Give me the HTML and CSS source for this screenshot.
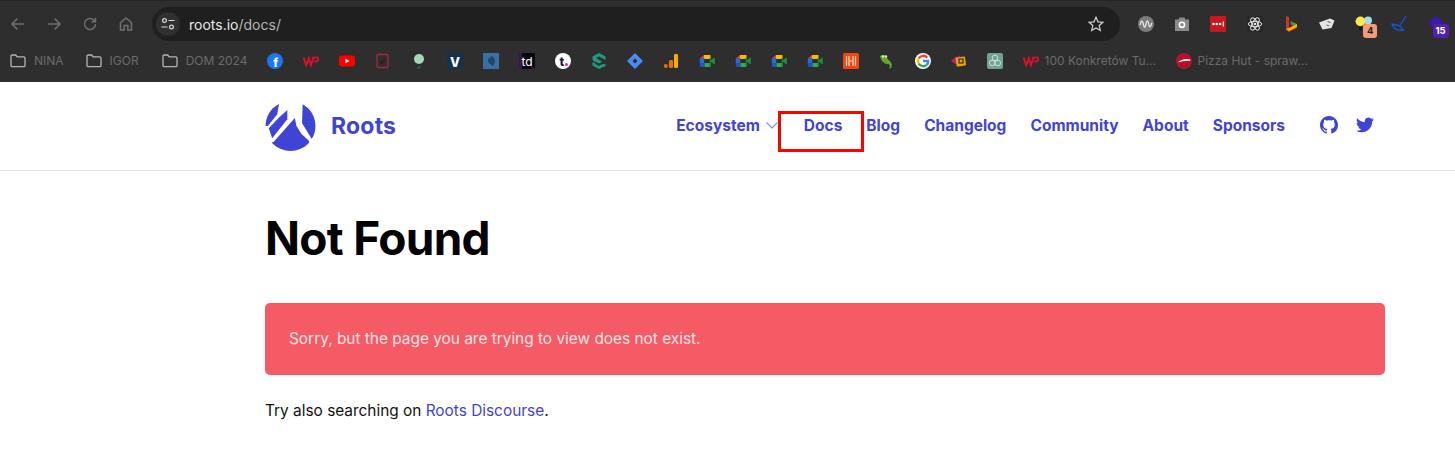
FILE: index.html
```html
<!DOCTYPE html>
<html lang="en">
<head>
<meta charset="utf-8">
<title>Not Found – Roots</title>
<link rel="stylesheet" href="styles.css">
</head>
<body>
<svg class="defs" width="0" height="0" aria-hidden="true">
  <symbol id="folder" viewBox="0 0 16 16"><path d="M1 3.200c0-.7.5-1.200 1.200-1.200h3.400l1.600 1.800h6.600c.7 0 1.200.5 1.200 1.200v7.400c0 .7-.5 1.200-1.200 1.200H2.200c-.7 0-1.200-.5-1.200-1.200z" fill="none" stroke="#b4b4b4" stroke-width="1.300"/></symbol>
  <symbol id="meet" viewBox="0 0 16 16">
    <path d="M5 2h6.500v4H5z" fill="#fbbc04"/>
    <path d="M.8 5.500 5 2v3.500z" fill="#ea4335"/>
    <path d="M.8 5.500h4.700v5H.8z" fill="#1f6fe0"/>
    <path d="M.8 10.500h4.700V14H2c-.7 0-1.200-.5-1.200-1.200z" fill="#1a57c4"/>
    <path d="M5.500 10h6v4h-6z" fill="#34a853"/>
    <path d="M10.500 5v9H11c.6 0 1-.4 1-1V5z" fill="#188038"/>
    <path d="M11 8l4-3.200c.4-.3.800 0 .8.400v5.600c0 .4-.4.700-.8.400z" fill="#1e8e3e"/>
    <path d="M5.500 6h5v4h-5z" fill="#2d2d2d"/>
  </symbol>
  <symbol id="wp" viewBox="0 0 16 16"><path d="M.6 4.500 3.200 12 5.900 5.500 8 12 10.400 4.500h3c2.400 0 2.400 4-.2 4h-2" fill="none" stroke="#d5112b" stroke-width="2.100"/></symbol>
</svg>

<header class="browser">
  <div class="toolbar">
    <div class="toolbar-nav">
      <svg class="tool" viewBox="0 0 16 16"><path d="M14 8H2.500M7.500 2.500 2 8l5.500 5.500" /></svg>
      <svg class="tool" viewBox="0 0 16 16"><path d="M2 8h11.500M8.500 2.500 14 8l-5.500 5.500" /></svg>
      <svg class="tool" viewBox="0 0 16 16"><path d="M13.500 8a5.500 5.500 0 1 1-1.600-3.900L13.500 5.700M13.500 1.800v3.900H9.600" /></svg>
      <svg class="tool" viewBox="0 0 16 16"><path d="M2.500 14V6.700L8 2l5.500 4.700V14h-3.700V9.500H6.200V14z" /></svg>
    </div>
    <div class="omnibox">
      <span class="tune">
        <svg viewBox="0 0 16 16" width="16" height="16"><circle cx="4.500" cy="4.500" r="1.900"/><path d="M8.500 4.500h6M1.500 11h6"/><circle cx="11.500" cy="11" r="1.900"/></svg>
      </span>
      <span class="url"><span class="url-host">roots.io</span>/docs/</span>
      <svg class="star" viewBox="0 0 16 16" width="16" height="16"><path d="M8 1.300l2 4.500 4.900.5-3.700 3.300 1.100 4.800L8 12l-4.300 2.400 1.100-4.800L1.100 6.300 6 5.800z"/></svg>
    </div>
    <div class="extensions">
      <svg class="ext" viewBox="0 0 16 16"><circle cx="8" cy="8" r="8" fill="#7c7c7c"/><path d="M2.200 9C3 4 4.500 4 5.300 8s1.700 4.500 2.700 0 2-4 2.700 0 2 3.500 3.100-1" fill="none" stroke="#e8e8e8" stroke-width="1.300"/></svg>
      <svg class="ext" viewBox="0 0 16 16"><path d="M1 3.500h3.500l1-2h5l1 2H15V15H1z" fill="#8a8a8a"/><circle cx="8" cy="8.800" r="3.400" fill="#fff"/><circle cx="8" cy="8.800" r="1.800" fill="#8a8a8a"/></svg>
      <svg class="ext" viewBox="0 0 16 16"><rect width="16" height="16" rx="1" fill="#c8171e"/><circle cx="3.500" cy="8" r="1.300" fill="#fff"/><circle cx="6.800" cy="8" r="1.300" fill="#fff"/><circle cx="10.100" cy="8" r="1.300" fill="#fff"/><path d="M13.300 5.500v5" stroke="#fff" stroke-width="1.200"/></svg>
      <svg class="ext" viewBox="0 0 16 16"><rect width="16" height="16" fill="#282828"/><g fill="none" stroke="#e6e6e6" stroke-width="1"><ellipse cx="8" cy="8" rx="6.800" ry="2.700"/><ellipse cx="8" cy="8" rx="6.800" ry="2.700" transform="rotate(60 8 8)"/><ellipse cx="8" cy="8" rx="6.800" ry="2.700" transform="rotate(120 8 8)"/></g><circle cx="8" cy="8" r="1.300" fill="#e6e6e6"/></svg>
      <svg class="ext" viewBox="0 0 16 16"><path d="M3 0l3 1v11l4-2-2-1-1-3 7 3v3l-8 4-3-2z" fill="#c53b2b"/><path d="M7 5l7 3v3L9 8z" fill="#3aa64a"/><path d="M6 12l8-4v3l-8 4-3-2z" fill="#f4b400"/></svg>
      <svg class="ext" viewBox="0 0 16 16"><path d="M0 6.500 11 2.500l4.500 2-3 7.500-9 1.500z" fill="#e4e4e4"/><path d="M8.500 5.500l3 1M7.500 9l2.500.8" stroke="#555" stroke-width="1"/></svg>
      <span class="ext-wrap">
        <svg class="ext ext-over" viewBox="0 0 20 18"><circle cx="14.500" cy="5" r="4.500" fill="#9fdcf2"/><circle cx="6" cy="6" r="5.500" fill="#f8e84a"/><path d="M4.500 12h3v4h-3z" fill="#111"/></svg>
        <span class="badge badge-orange">4</span>
      </span>
      <svg class="ext" viewBox="0 0 16 16"><path d="M15 0 9 9.500" stroke="#1a55d8" stroke-width="1.200" fill="none"/><path d="M1 8 8 9.500 12.500 14c-4 1-9.500 0-11.500-6z" fill="none" stroke="#1a55d8" stroke-width="1.300"/></svg>
      <span class="ext-wrap">
        <svg class="ext" viewBox="0 0 16 16"><path d="M8 0l8 7-8 7-8-7z" fill="#3a1aa8"/></svg>
        <span class="badge badge-purple">15</span>
      </span>
    </div>
  </div>

  <nav class="bookmarks">
    <a class="bm bm-folder"><svg class="fav"><use href="#folder"/></svg>NINA</a>
    <a class="bm bm-folder bm-middle"><svg class="fav"><use href="#folder"/></svg>IGOR</a>
    <a class="bm bm-folder bm-last"><svg class="fav"><use href="#folder"/></svg>DOM 2024</a>
    <svg class="fav" viewBox="0 0 16 16"><circle cx="8" cy="8" r="8" fill="#1877f2"/><text x="8.800" y="13.500" class="fav-text" font-size="12" fill="#fff" text-anchor="middle">f</text></svg>
    <svg class="fav"><use href="#wp"/></svg>
    <svg class="fav" viewBox="0 0 16 16"><rect y="2.500" width="16" height="11" rx="3" fill="#f00"/><path d="M6.500 5.700v4.600L10.500 8z" fill="#fff"/></svg>
    <svg class="fav" viewBox="0 0 16 16"><rect x="2" y="1.500" width="11" height="13" rx="1" fill="none" stroke="#a6283c" stroke-width="1.300"/><path d="M5 8l2 2 3-4" fill="none" stroke="#1f1f1f" stroke-width="1.500"/></svg>
    <svg class="fav" viewBox="0 0 16 16"><circle cx="8" cy="6" r="5" fill="#a6d8b2"/><circle cx="8" cy="14.500" r="1.500" fill="#0b6b3a"/></svg>
    <svg class="fav" viewBox="0 0 16 16"><rect width="16" height="16" fill="#12324f"/><text x="8" y="13.500" class="fav-text" font-size="13" fill="#fff" text-anchor="middle">V</text></svg>
    <svg class="fav" viewBox="0 0 16 16"><rect width="16" height="16" fill="#3a6ea5"/><path d="M5 6 9 3l3 3v3l-2 4-3-2-2-2z" fill="#22456e"/></svg>
    <svg class="fav" viewBox="0 0 16 16"><rect width="16" height="16" fill="#0a0610"/><path d="M0 0h3v16H0zM11 11l5 5h-3z" fill="#3c1550"/><text x="8" y="12.500" class="fav-text-light" font-size="12" fill="#fff" text-anchor="middle">td</text></svg>
    <svg class="fav" viewBox="0 0 16 16"><circle cx="8" cy="8" r="8" fill="#fff"/><text x="6.800" y="13" class="fav-text" font-size="12.500" fill="#1c1f3a" text-anchor="middle">t</text><circle cx="11.500" cy="11.500" r="1.500" fill="#ff1aa3"/></svg>
    <svg class="fav" viewBox="0 0 16 16"><path d="M8 0l6.500 3.500V7L11 5 8 3.500 5 5l6 3.500-3 2-4-2 .1 2.500L8 13l3-1.800 3.500-.2v2L8 16l-6.500-3.500V9l4 2-.5.500L3 8 1.500 7V3.500z" fill="#1f9a83"/></svg>
    <svg class="fav" viewBox="0 0 16 16"><path d="M8 0l8 8-8 8-8-8z" fill="#4c8bf5"/><path d="M8 5.500 10.500 8 8 10.500 5.500 8z" fill="#2d2d2d"/></svg>
    <svg class="fav" viewBox="0 0 16 16"><rect x="11" y="1" width="4" height="14" rx="1.200" fill="#f9ab00"/><rect x="6" y="7" width="4" height="8" rx="1.200" fill="#e37400"/><circle cx="2.800" cy="13" r="2" fill="#e37400"/></svg>
    <svg class="fav"><use href="#meet"/></svg>
    <svg class="fav"><use href="#meet"/></svg>
    <svg class="fav"><use href="#meet"/></svg>
    <svg class="fav"><use href="#meet"/></svg>
    <svg class="fav" viewBox="0 0 16 16"><rect width="16" height="16" rx="1.500" fill="#f4450f"/><path d="M3.500 3v10M6 3v10M10 3v10M12.500 3v10M6 8h4" stroke="#ffd9c8" stroke-width="1.200"/></svg>
    <svg class="fav" viewBox="0 0 16 16"><path d="M1 3.500c2-2 6-2 7 1 1 2.500 3.500 3.500 4.500 6 1 3-.5 5.500-2.500 5 1-1 1-3 0-4.500C7 12 3 9 2 6z" fill="#63a62d"/><circle cx="4" cy="3.500" r="1.300" fill="#d7e89a"/><circle cx="7" cy="3.500" r="1.300" fill="#d7e89a"/></svg>
    <svg class="fav" viewBox="0 0 16 16"><circle cx="8" cy="8" r="8" fill="#fff"/><g fill="none" stroke-width="2.400"><path d="M12.200 4.700A5.200 5.200 0 0 0 3.700 5.400" stroke="#ea4335"/><path d="M3.700 5.400a5.200 5.200 0 0 0 0 5.200" stroke="#fbbc05"/><path d="M3.700 10.600a5.200 5.200 0 0 0 8 1.200" stroke="#34a853"/><path d="M11.700 11.800A5 5 0 0 0 13.200 8H8" stroke="#4285f4"/></g></svg>
    <svg class="fav" viewBox="0 0 16 16"><path d="M0 8l6-5 2 10z" fill="#e0195a"/><path d="M3 8l6-6 2 10z" fill="#6a2bd0"/><rect x="5" y="4" width="9.500" height="9" rx="1" fill="#eba10c" transform="rotate(-8 10 8)"/><rect x="8" y="6" width="4" height="4" fill="none" stroke="#333" stroke-width="1.200"/></svg>
    <svg class="fav" viewBox="0 0 16 16"><rect width="16" height="16" rx="2" fill="#6fa394"/><g fill="none" stroke="#d6e6e0" stroke-width=".9"><circle cx="8" cy="5" r="2.800"/><circle cx="5.200" cy="10" r="2.800"/><circle cx="10.800" cy="10" r="2.800"/></g></svg>
    <a class="bm bm-titled"><svg class="fav"><use href="#wp"/></svg><span class="bm-label bm-label-wp">100 Konkretów Tu...</span></a>
    <a class="bm bm-titled"><svg class="fav" viewBox="0 0 16 16"><circle cx="8" cy="8" r="8" fill="#b5112a"/><path d="M1.500 9.500C5 6.500 10 5 14.500 6.500L14 8c-4-.5-8 .5-12.500 1.500z" fill="#fff"/></svg><span class="bm-label bm-label-pizza">Pizza Hut - spraw...</span></a>
  </nav>
</header>

<header class="site-header">
  <div class="container header-row">
    <a class="brand">
      <svg class="brand-mark" viewBox="0 0 50 50" width="51" height="50">
        <clipPath id="logoclip"><circle cx="25" cy="25" r="25"/></clipPath>
        <g clip-path="url(#logoclip)" fill="#3f44d4">
          <path d="M13.500-2V3L11.700 13.300 2.400 25H-3V-2z"/>
          <path d="M21.800 9v9.300L6.700 37.300 3.300 27.300l10-10.600z"/>
          <path d="M29.300 17l1.700 8 5 8 7.200 6.500L46 52H0V44l8.300-3.300z"/>
          <path d="M37.300 0 36.500 22l10.200 16.700H55V0z"/>
        </g>
      </svg>
      <span class="brand-name">Roots</span>
    </a>
    <nav class="site-nav">
      <a class="nav-link nav-eco">Ecosystem<svg class="chev" viewBox="0 0 12 7" width="12" height="7"><path d="M.5.500 6 6l5.500-5.500"/></svg></a>
      <a class="nav-link">Docs</a>
      <a class="nav-link">Blog</a>
      <a class="nav-link">Changelog</a>
      <a class="nav-link">Community</a>
      <a class="nav-link">About</a>
      <a class="nav-link">Sponsors</a>
      <span class="social">
        <svg viewBox="0 0 16 16" width="18" height="18"><path d="M8 0C3.580 0 0 3.580 0 8c0 3.540 2.290 6.530 5.470 7.590.4.07.55-.17.55-.38 0-.19-.01-.82-.01-1.490-2.010.37-2.530-.49-2.690-.94-.09-.23-.48-.94-.82-1.130-.28-.15-.68-.52-.01-.53.63-.01 1.080.58 1.230.82.72 1.210 1.870.87 2.330.66.07-.52.28-.87.51-1.070-1.780-.2-3.640-.89-3.640-3.950 0-.87.31-1.590.82-2.150-.08-.2-.36-1.020.08-2.120 0 0 .67-.21 2.200.82.64-.18 1.320-.27 2-.27.68 0 1.360.09 2 .27 1.530-1.040 2.200-.82 2.200-.82.44 1.100.16 1.920.08 2.120.51.56.82 1.270.82 2.150 0 3.070-1.870 3.750-3.650 3.950.29.25.54.73.54 1.480 0 1.070-.01 1.930-.01 2.200 0 .21.15.46.55.38A8.013 8.013 0 0 0 16 8c0-4.420-3.580-8-8-8z"/></svg>
        <svg viewBox="0 0 24 24" width="18" height="18"><path d="M23.953 4.570a10 10 0 0 1-2.825.775 4.958 4.958 0 0 0 2.163-2.723c-.951.555-2.005.959-3.127 1.184a4.920 4.920 0 0 0-8.384 4.482C7.690 8.095 4.067 6.130 1.640 3.162a4.822 4.822 0 0 0-.666 2.475c0 1.710.87 3.213 2.188 4.096a4.904 4.904 0 0 1-2.228-.616v.06a4.923 4.923 0 0 0 3.946 4.827 4.996 4.996 0 0 1-2.212.085 4.936 4.936 0 0 0 4.604 3.417 9.867 9.867 0 0 1-6.102 2.105c-.39 0-.779-.023-1.170-.067a13.995 13.995 0 0 0 7.557 2.209c9.053 0 13.998-7.496 13.998-13.985 0-.21 0-.42-.015-.63A9.935 9.935 0 0 0 24 4.590z"/></svg>
      </span>
    </nav>
  </div>
</header>

<main class="container main">
  <h1 class="title">Not Found</h1>
  <div class="alert">Sorry, but the page you are trying to view does not exist.</div>
  <p class="note">Try also searching on <a class="link">Roots Discourse</a>.</p>
</main>

<div class="annotation"></div>
</body>
</html>
```

FILE: styles.css
```css
* { box-sizing: border-box; }
html, body { margin: 0; height: 465px; overflow: hidden; }
body { background: #fff; font-family: "Inter", "Liberation Sans", sans-serif; color: #000; position: relative; }
.defs { position: absolute; }

.browser { background: #2e2e2e; height: 82px; display: flex; flex-direction: column; border-top: 1px solid #262626; }
.toolbar { height: 40px; padding: 6px 0 0 10px; display: flex; align-items: flex-start; }
.toolbar-nav { display: flex; gap: 20px; width: 142px; padding-top: 9px; }
.tool { width: 16px; height: 16px; fill: none; stroke: #6f6f6f; stroke-width: 1.5; }
.omnibox { width: 968px; height: 34px; border-radius: 17px; background: #1f1f1f; display: flex; align-items: center; padding: 0 16px 0 4px; }
.tune { width: 24px; height: 24px; border-radius: 50%; background: #303030; display: flex; align-items: center; justify-content: center; }
.tune svg { fill: none; stroke: #d8d8d8; stroke-width: 1.2; }
.url { margin-left: 9px; font-size: 14px; color: #b5b5b5; flex: 1; }
.url-host { color: #e8e8e8; }
.star { fill: none; stroke: #c8c8c8; stroke-width: 1.300; }
.extensions { display: flex; gap: 20.200px; padding: 9px 0 0 18px; }
.ext { width: 16px; height: 16px; display: block; }
.ext-over { width: 18px; height: 16px; }
.ext-wrap { position: relative; display: block; width: 16px; height: 16px; }
.badge { position: absolute; left: 8px; top: 8px; min-width: 14px; height: 14px; border-radius: 3px; font-size: 9.500px; font-weight: 700; line-height: 14px; text-align: center; padding: 0 2px; }
.badge-orange { background: #f59a78; color: #222; }
.badge-purple { background: #5020b0; color: #fff; left: 5px; min-width: 16px; }

.bookmarks { flex: 1; display: flex; align-items: center; gap: 20px; padding: 0 0 2px 10px; }
.fav { width: 16px; height: 16px; display: block; flex: none; }
.fav-text { font-family: "Inter", sans-serif; font-weight: 800; }
.fav-text-light { font-family: "Inter", sans-serif; font-weight: 400; }
.bm { display: flex; align-items: center; gap: 8px; font-size: 12px; color: #6b6b6b; white-space: nowrap; }
.bm-folder { margin-right: 2px; }
.bm-middle { margin-right: 3px; }
.bm-last { margin-right: -1px; }
.bm-titled { gap: 6px; }
.bm-label-wp { width: 111px; }
.bm-label-pizza { width: 110px; }

.site-header { height: 89px; border-bottom: 1px solid #e6e6f0; }
.container { margin-left: 265px; width: 1120px; }
.header-row { height: 88px; display: flex; align-items: center; }
.brand { display: flex; align-items: center; gap: 15px; color: #3f44d4; }
.brand-mark { display: block; }
.brand-name { font-size: 23px; font-weight: 700; letter-spacing: .2px; }
.site-nav { margin-left: auto; display: flex; align-items: center; gap: 24px; padding: 0 11px 2px 0; }
.nav-link { font-size: 15.500px; font-weight: 700; color: #3f44d4; white-space: nowrap; }
.nav-eco { display: flex; align-items: center; gap: 6px; margin-right: 2px; }
.chev { fill: none; stroke: #8487e2; stroke-width: 1.100; }
.social { display: flex; gap: 18px; fill: #3f44d4; margin-left: 11px; }

.main { padding-top: 38px; }
.title { margin: 0; font-size: 46px; line-height: 58px; font-weight: 700; letter-spacing: -.7px; color: #000; }
.alert { margin-top: 36px; height: 72px; border-radius: 5px; background: #f55b64; color: #fde4e4; font-size: 15.400px; display: flex; align-items: center; padding: 0 0 1px 24px; }
.note { margin: 26px 0 0; font-size: 15.400px; line-height: 20px; color: #111; }
.link { color: #3f44d4; }

.annotation { position: absolute; left: 778px; top: 111px; width: 86px; height: 41px; border: 3px solid #f00; }
```
